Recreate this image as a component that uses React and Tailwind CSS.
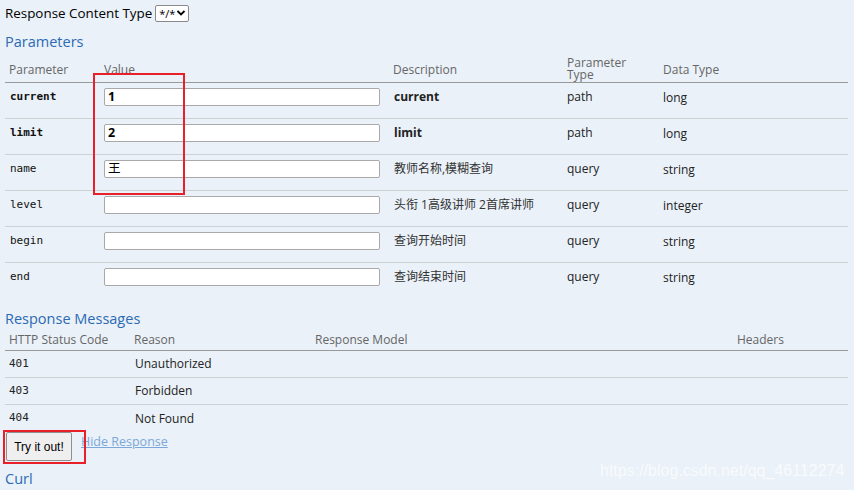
import React from 'react';

// ─── Data ───────────────────────────────────────────────────────────────────

const params = [
  { name: 'current', value: '1', desc: 'current', type: 'path', data: 'long', bold: true },
  { name: 'limit', value: '2', desc: 'limit', type: 'path', data: 'long', bold: true },
  { name: 'name', value: '王', desc: '教师名称,模糊查询', type: 'query', data: 'string' },
  { name: 'level', value: '', desc: '头衔 1高级讲师 2首席讲师', type: 'query', data: 'integer' },
  { name: 'begin', value: '', desc: '查询开始时间', type: 'query', data: 'string' },
  { name: 'end', value: '', desc: '查询结束时间', type: 'query', data: 'string' },
];

const messages = [
  { code: '401', reason: 'Unauthorized' },
  { code: '403', reason: 'Forbidden' },
  { code: '404', reason: 'Not Found' },
];

const sans = "font-['Segoe_UI','Open_Sans','Noto_Sans_CJK_SC',sans-serif]";
const mono = "font-['DejaVu_Sans_Mono','Liberation_Mono',monospace]";
const paramCols = 'grid grid-cols-[99px_285px_174px_96px_189px]';
const msgCols = 'grid grid-cols-[126px_180px_422px_115px]';

// ─── Parameters table ───────────────────────────────────────────────────────

function ParamRow({ p, last }) {
  return (
    <div className={`${paramCols} h-[36px] ${last ? '' : 'border-b border-[#cfd2d5]'}`}>
      <div className={`${mono} pl-[5px] pt-[6px] text-[11px] text-[#111] ${p.bold ? 'font-bold' : ''}`}>
        {p.name}
      </div>
      <div className="pt-[5px]">
        <div className={`h-[18px] w-[276px] rounded-[2px] border border-[#a9a9a9] bg-white px-[3px] text-[12.5px] leading-[16px] text-black ${p.bold ? 'font-bold' : ''}`}>
          {p.value}
        </div>
      </div>
      <div className={`pl-[5px] pt-[5px] text-[12px] ${p.bold ? 'font-bold text-[#222]' : 'text-[#333]'}`}>
        {p.desc}
      </div>
      <div className="pl-[4px] pt-[5px] text-[12px] text-[#222]">{p.type}</div>
      <div className="pl-[4px] pt-[6px] text-[12px] text-[#222]">{p.data}</div>
    </div>
  );
}

// ─── Page ───────────────────────────────────────────────────────────────────

export default function App() {
  return (
    <div className={`${sans} relative h-[490px] w-[854px] overflow-hidden bg-[#eaf1f8] text-[#222]`}>
      {/* Response content type */}
      <div className="flex items-center gap-[3px] pl-[5px] pt-[4px] text-[13.4px] leading-[18px] text-black">
        <span>Response Content Type</span>
        <div className="flex h-[17px] items-center gap-[1px] rounded-[2px] border border-[#8a8a8a] bg-white pl-[3px] pr-[2px] text-[11px] leading-none">
          <span>*/*</span>
          <svg width="10" height="8" viewBox="0 0 10 8">
            <path d="M1.5 2 L5 5.5 L8.5 2" fill="none" stroke="#000" strokeWidth="1.8" />
          </svg>
        </div>
      </div>

      <h4 className="pl-[5px] pt-[10px] text-[14.5px] leading-[20px] text-[#2b6ab4]">Parameters</h4>

      <div className="relative ml-[5px] w-[843px]">
        <div className={`${paramCols} h-[31px] items-center border-b border-[#999] pt-[3px] text-[12px] text-[#666]`}>
          <div className="pl-[4px] pt-[2px]">Parameter</div>
          <div className="pt-[2px]">Value</div>
          <div className="pl-[4px] pt-[2px]">Description</div>
          <div className="pl-[4px] leading-[12px]">Parameter<br />Type</div>
          <div className="pl-[4px] pt-[2px]">Data Type</div>
        </div>
        {params.map((p, i) => (
          <ParamRow key={p.name} p={p} last={i === params.length - 1} />
        ))}

        {/* highlight box */}
        <div className="absolute left-[88px] top-[21px] h-[122px] w-[92px] border-2 border-[#e8202a]" />
      </div>

      <h4 className="pl-[5px] pt-[10px] text-[14.5px] leading-[20px] text-[#2b6ab4]">Response Messages</h4>

      <div className="ml-[5px] w-[843px]">
        <div className={`${msgCols} h-[22px] border-b border-[#999] pt-[3px] text-[12px] leading-[15px] text-[#666]`}>
          <div className="pl-[4px]">HTTP Status Code</div>
          <div className="pl-[3px]">Reason</div>
          <div className="pl-[4px]">Response Model</div>
          <div className="pl-[4px]">Headers</div>
        </div>
        {messages.map((m, i) => (
          <div
            key={m.code}
            className={`${msgCols} h-[27px] items-center ${i < messages.length - 1 ? 'border-b border-[#cfd2d5]' : ''} text-[12.5px] text-[#222]`}
          >
            <div className={`${mono} pl-[4px] text-[11px]`}>{m.code}</div>
            <div className="pl-[4px] text-[12px]">{m.reason}</div>
            <div />
            <div />
          </div>
        ))}
      </div>

      {/* Try it out */}
      <div className="relative flex items-start pl-[6px]">
        <button className="h-[29px] w-[66px] rounded-[2px] border border-[#8f8f8f] bg-[#efefef] font-['Liberation_Sans',Arial,sans-serif] text-[12px] text-black">
          Try it out!
        </button>
        <a className="ml-[9px] pt-[1px] text-[12.5px] text-[#7ba7d9] underline">Hide Response</a>
        <div className="absolute left-[3px] top-[-2px] h-[34px] w-[83px] border-2 border-[#e8202a]" />
      </div>

      <h4 className="pl-[5px] pt-[8px] text-[14.5px] leading-[20px] text-[#2b6ab4]">Curl</h4>

      {/* watermark */}
      <div className="absolute left-[600px] top-[459px] font-['Liberation_Sans',Arial,sans-serif] text-[16px] text-white/70">
        https://blog.csdn.net/qq_46112274
      </div>
    </div>
  );
}
